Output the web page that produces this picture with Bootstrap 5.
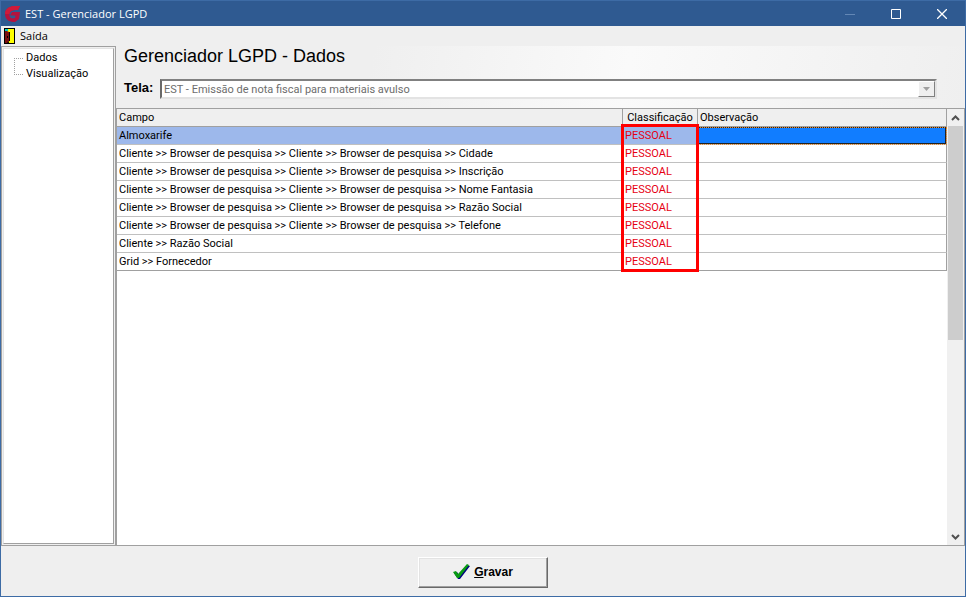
<!DOCTYPE html>
<html lang="pt-BR">
<head>
<meta charset="utf-8">
<meta name="viewport" content="width=device-width, initial-scale=1">
<title>EST - Gerenciador LGPD</title>
<link href="https://cdn.jsdelivr.net/npm/bootstrap@5.3.0/dist/css/bootstrap.min.css" rel="stylesheet">
<style>
body{font:11px/18px Roboto,Arial,sans-serif;color:#000;background:#efefef}
button,select{font:inherit;color:inherit}
.window{border:1px solid #3d6ba5}
.titlebar{height:25px;background:#2f5a91;color:#fff;font:11px/24px "Open Sans",sans-serif}
.title-btn{width:46px;height:25px;border:0;background:none;padding:0}
.menubar{height:20px;font:11px/20px "Open Sans",sans-serif;padding:0 3px}
.main-area{border-bottom:1px solid #a0a0a0}
.sidebar{width:115px;border:1px solid #a0a0a0;border-width:1px 1px 0 1px;padding:1px}
.sidebar-inner{background:#fff;border:1px solid #e3e3e3;border-right-color:#a0a0a0;border-bottom-color:#a0a0a0;line-height:16px;padding:1px 0 0 10px}
.tree-item{height:16px;color:#000}
.heading-area{height:62px;padding:0 28px 0 8px;background:linear-gradient(100deg,#efefef 30%,#fafafa 60%,#efefef)}
.heading-area h1{font:18px/20px "Liberation Sans",Arial,sans-serif;padding-bottom:13px}
.tela-label{font:bold 13px/18px "Liberation Sans",Arial,sans-serif;width:36px}
.combo{height:20px;background:#fff;border:2px solid;border-color:#808080 #e3e3e3 #e3e3e3 #696969}
.combo select{appearance:none;border:0;background:#fff;color:#6d6d6d;opacity:1;padding:1px 2px 0;height:16px;line-height:15px}
.combo-arrow{width:17px;background:#efefef;border:1px solid;border-color:#fff #808080 #808080 #fff}
.grid-area{background:#fff;border-left:1px solid #a0a0a0;border-top:1px solid #a0a0a0}
.data-grid{table-layout:fixed;border-collapse:separate;border-spacing:0}
.data-grid th,.data-grid td{height:18px;line-height:16px;padding:1px 2px 0;white-space:nowrap;border-right:1px solid #a0a0a0;border-bottom:1px solid #c0c0c0}
.data-grid th{font-weight:400;background:#efefef;border-bottom-color:#a0a0a0}
.data-grid tr:last-child td{border-bottom-color:#a0a0a0}
.data-grid .kind{color:#e60012}
.data-grid tr.current td{background:#9db8eb}
.data-grid tr.current td.focused{background:#117dff;box-shadow:inset 0 0 0 1px #222;outline:1px dotted #e88a2d;outline-offset:-1px}
.marker{left:504px;top:15px;width:78px;height:148px;border:3px solid #f00}
.scroller{width:18px;background:#f0f0f0;border-right:1px solid #a0a0a0}
.scroller button{height:17px;border:0;background:none;padding:0}
.thumb{height:214px;width:15px;background:#cdcdcd}
.footer-bar{height:50px;padding-top:2px}
.save-btn{width:130px;height:31px;background:#f0f0f0;border:1px solid;border-color:#fff #696969 #696969 #fff;box-shadow:inset -1px -1px #a0a0a0,inset 1px 1px #e3e3e3;font:bold 12px/18px "Liberation Sans",Arial,sans-serif}
</style>
<script src="https://cdn.jsdelivr.net/npm/bootstrap@5.3.0/dist/js/bootstrap.bundle.min.js"></script>
</head>
<body>
<div class="window d-flex flex-column vh-100 overflow-hidden">
  <header class="titlebar d-flex align-items-center flex-shrink-0">
    <svg class="ms-1 me-1" width="16" height="16" viewBox="0 0 16 16" aria-hidden="true"><path d="M15 0C8-1 0 1 0 8c0 7 6 8 10 8l4-3 1-7H7L5 9.500h5.500L10 12c-4 1-6-1-5.500-4C5 4 9 4 13 4z" fill="#b5123e"/><path d="M15 0C8-1 0 1 0 8l4.500 0C5 4 9 4 13 4z" fill="#cf1a3a"/></svg>
    <span class="flex-grow-1">EST - Gerenciador LGPD</span>
    <button class="title-btn" aria-label="Minimizar"><svg class="d-block mx-auto" width="10" height="10"><path d="M0 5.500h10" stroke="#6387b5"/></svg></button>
    <button class="title-btn" aria-label="Maximizar"><svg class="d-block mx-auto" width="10" height="10"><path d="M.5.5h9v9h-9z" fill="none" stroke="#fff"/></svg></button>
    <button class="title-btn" aria-label="Fechar"><svg class="d-block mx-auto" width="10" height="10"><path d="M0 0l10 10M10 0L0 10" stroke="#fff" stroke-width="1.3"/></svg></button>
  </header>
  <nav class="menubar flex-shrink-0">
    <a href="#" class="d-flex align-items-center text-reset text-decoration-none h-100">
      <svg class="me-1" width="12" height="16" aria-hidden="true"><path d="M0 0h11v16H0z"/><path d="M2 1h8v14H5z" fill="#ff0"/><path d="M1 2l4 2v9l-2 2H1z" fill="#7b0f10"/><path d="M1 1h3v2H1z" fill="#0cc"/><path d="M5 4h1v9H5zM3 8h1v2H3z"/></svg>Saída</a>
  </nav>
  <div class="main-area d-flex flex-grow-1">
    <aside class="sidebar d-flex flex-shrink-0">
      <div class="sidebar-inner flex-grow-1 d-flex align-items-start">
        <svg class="flex-shrink-0" width="12" height="32" aria-hidden="true"><path d="M.5 8v17M2 8.500h8M2 24.500h8" stroke="#a0a0a0" stroke-dasharray="1 1"/></svg>
        <div class="d-flex flex-column">
          <a href="#" class="tree-item text-decoration-none">Dados</a>
          <a href="#" class="tree-item text-decoration-none">Visualização</a>
        </div>
      </div>
    </aside>
    <main class="flex-grow-1 d-flex flex-column">
      <div class="heading-area flex-shrink-0">
        <h1 class="m-0">Gerenciador LGPD - Dados</h1>
        <div class="d-flex">
          <label class="tela-label" for="tela">Tela:</label>
          <div class="combo d-flex flex-grow-1">
            <select id="tela" class="flex-grow-1" disabled><option>EST - Emissão de nota fiscal para materiais avulso</option></select>
            <span class="combo-arrow d-flex align-items-center justify-content-center"><svg width="7" height="4"><path d="M0 0h7L3.500 4z" fill="#a0a0a0"/></svg></span>
          </div>
        </div>
      </div>
      <div class="grid-area flex-grow-1 d-flex">
        <div class="flex-grow-1 position-relative">
          <table class="data-grid w-100">
            <colgroup><col><col style="width:75px"><col style="width:249px"></colgroup>
            <thead><tr><th>Campo</th><th class="text-center">Classificação</th><th>Observação</th></tr></thead>
            <tbody>
              <tr class="current"><td>Almoxarife</td><td class="kind">PESSOAL</td><td class="focused"></td></tr>
              <tr><td>Cliente &gt;&gt; Browser de pesquisa &gt;&gt; Cliente &gt;&gt; Browser de pesquisa &gt;&gt; Cidade</td><td class="kind">PESSOAL</td><td></td></tr>
              <tr><td>Cliente &gt;&gt; Browser de pesquisa &gt;&gt; Cliente &gt;&gt; Browser de pesquisa &gt;&gt; Inscrição</td><td class="kind">PESSOAL</td><td></td></tr>
              <tr><td>Cliente &gt;&gt; Browser de pesquisa &gt;&gt; Cliente &gt;&gt; Browser de pesquisa &gt;&gt; Nome Fantasia</td><td class="kind">PESSOAL</td><td></td></tr>
              <tr><td>Cliente &gt;&gt; Browser de pesquisa &gt;&gt; Cliente &gt;&gt; Browser de pesquisa &gt;&gt; Razão Social</td><td class="kind">PESSOAL</td><td></td></tr>
              <tr><td>Cliente &gt;&gt; Browser de pesquisa &gt;&gt; Cliente &gt;&gt; Browser de pesquisa &gt;&gt; Telefone</td><td class="kind">PESSOAL</td><td></td></tr>
              <tr><td>Cliente &gt;&gt; Razão Social</td><td class="kind">PESSOAL</td><td></td></tr>
              <tr><td>Grid &gt;&gt; Fornecedor</td><td class="kind">PESSOAL</td><td></td></tr>
            </tbody>
          </table>
          <div class="marker position-absolute"></div>
        </div>
        <div class="scroller d-flex flex-column flex-shrink-0 align-items-center">
          <button aria-label="Rolar para cima"><svg width="9" height="6" class="d-block"><path d="M1 5l3.500-3.500L8 5" fill="none" stroke="#505050" stroke-width="2"/></svg></button>
          <div class="thumb"></div>
          <button class="mt-auto" aria-label="Rolar para baixo"><svg width="9" height="6" class="d-block"><path d="M1 1l3.500 3.500L8 1" fill="none" stroke="#505050" stroke-width="2"/></svg></button>
        </div>
      </div>
    </main>
  </div>
  <footer class="footer-bar d-flex align-items-center justify-content-center flex-shrink-0">
    <button class="save-btn d-flex align-items-center justify-content-center gap-1">
      <svg width="17" height="16" viewBox="0 0 17 16" aria-hidden="true"><path d="M1 9l3-1 2 3 8-10 3 1L7 15H5z" fill="#000080"/><path d="M0 8l3-1 2 3 9-10 2 1L6 14H4z" fill="#0a9a14"/></svg>
      <span><u>G</u>ravar</span>
    </button>
  </footer>
</div>
</body>
</html>
